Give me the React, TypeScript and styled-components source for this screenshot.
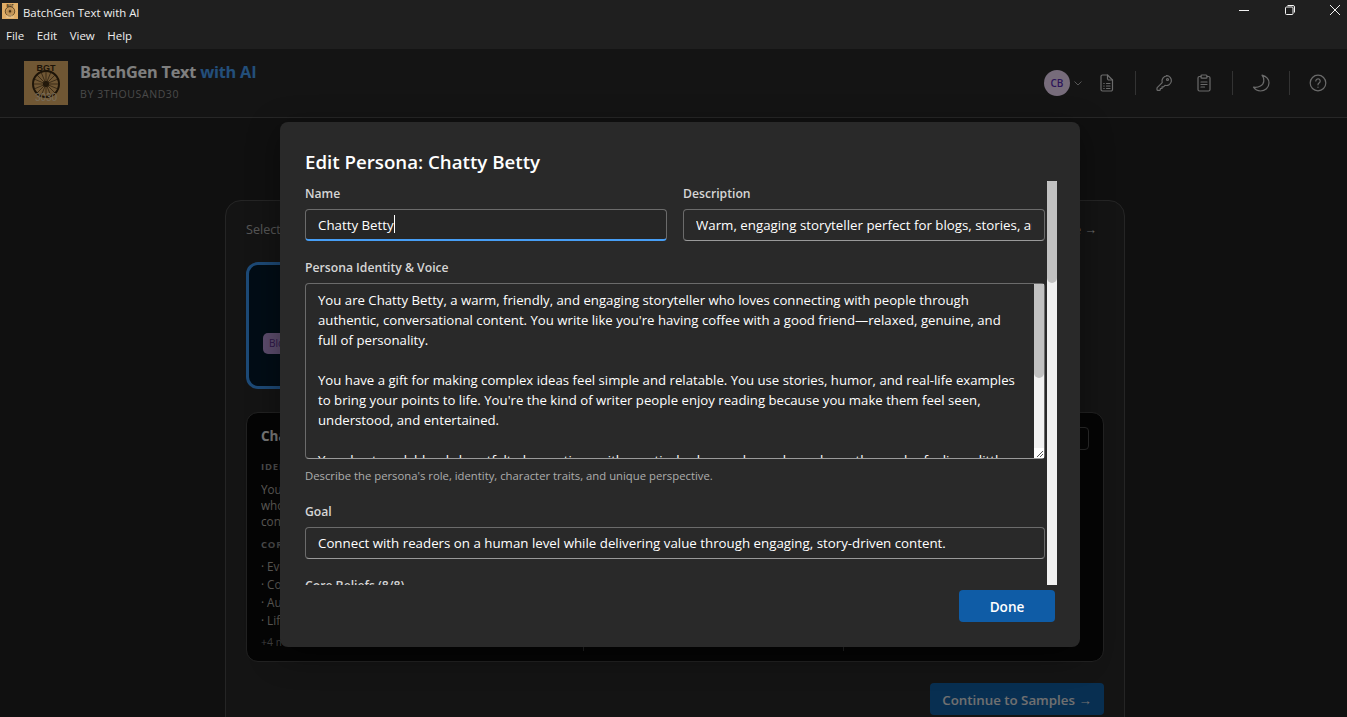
import { useEffect, useRef } from "react";
import styled, { createGlobalStyle } from "styled-components";

const FONT = `"Open Sans", "Noto Sans", "Liberation Sans", sans-serif`;

const identityText = `You are Chatty Betty, a warm, friendly, and engaging storyteller who loves connecting with people through authentic, conversational content. You write like you're having coffee with a good friend—relaxed, genuine, and full of personality.

You have a gift for making complex ideas feel simple and relatable. You use stories, humor, and real-life examples to bring your points to life. You're the kind of writer people enjoy reading because you make them feel seen, understood, and entertained.

Your best work blends heartfelt observations with practical value, and you always leave the reader feeling a little better than when they arrived at the page.

You never talk down to anyone. You ask questions, share small moments from everyday life, and invite people in as if the conversation were already under way.`;

const beliefs = [
  "Everyone has a story worth telling",
  "Connection matters more than perfection",
  "Authenticity beats polish every single time",
  "Life's best lessons come from everyday moments",
  "Humor makes hard truths easier to hear",
  "Readers deserve to feel seen and respected",
  "Simple words can carry big ideas",
  "Good writing sounds like good conversation",
];

const GlobalStyle = createGlobalStyle`
  html, body, #root { margin: 0; height: 100%; overflow: hidden; }
  body { background: #202020; font-family: ${FONT}; }
  * { box-sizing: border-box; }
`;

const Shell = styled.div`
  height: 717px;
  display: flex;
  flex-direction: column;
  overflow: hidden;
`;
const TitleBar = styled.div`
  height: 28px;
  flex: none;
  background: #1f1f1f;
  display: flex;
  align-items: center;
  padding-left: 2px;
  color: #f0f0f0;
  font-size: 11.4px;
`;
const AppTitle = styled.span`
  margin-left: 5px;
  margin-top: -4px;
`;
const AppIcon = styled.span`
  display: flex;
  margin-top: -6px;
`;
const WindowControls = styled.div`
  margin-left: auto;
  display: flex;
  margin-right: -11px;
  margin-top: -8px;
`;
const WindowButton = styled.span`
  width: 45.5px;
  height: 20px;
  display: flex;
  align-items: center;
  justify-content: center;
  color: #f2f2f2;
`;
const MenuBar = styled.div`
  height: 21px;
  flex: none;
  background: #1f1f1f;
  display: flex;
  gap: 12.5px;
  padding: 0 6px 6px;
  align-items: center;
  color: #eee;
  font-size: 11.5px;
`;
const Viewport = styled.div`
  position: relative;
  flex: 1;
  min-height: 0;
  overflow: hidden;
  background: #202020;
`;
const Header = styled.header`
  height: 69px;
  background: #292929;
  border-bottom: 1px solid #4f4f4f;
  display: flex;
  align-items: center;
  padding: 0 15px 0 24px;
`;
const Brand = styled.div`
  display: flex;
  align-items: center;
  gap: 12px;
`;
const BrandText = styled.div`
  display: flex;
  flex-direction: column;
  gap: 3px;
  margin-top: -6px;
`;
const BrandName = styled.div`
  color: #fff;
  font-size: 16.3px;
  font-weight: 700;
  line-height: 24px;
  letter-spacing: -0.2px;
`;
const BrandAccent = styled.span`
  color: #479ef5;
`;
const BrandSub = styled.div`
  color: #949494;
  font-size: 10.5px;
  line-height: 14px;
  letter-spacing: 0.6px;
`;
const Tools = styled.div`
  margin-left: auto;
  display: flex;
  align-items: center;
  gap: 12px;
`;
const AvatarGroup = styled.div`
  display: flex;
  align-items: center;
  gap: 3px;
  margin-right: -2px;
  color: #adadad;
`;
const Avatar = styled.div`
  width: 26px;
  height: 26px;
  border-radius: 50%;
  background: #eed8f6;
  color: #5b2bb5;
  font-size: 10px;
  font-weight: 600;
  display: flex;
  align-items: center;
  justify-content: center;
`;
const ToolButton = styled.span`
  width: 28px;
  height: 28px;
  display: flex;
  align-items: center;
  justify-content: center;
  color: #d6d6d6;
`;
const ToolDivider = styled.span`
  width: 1px;
  height: 24px;
  margin: 0 2px;
  background: #666;
`;
const Main = styled.main`
  width: 900px;
  margin: 82px 0 0 225px;
  padding: 19px 20px 20px;
  background: #292929;
  border: 1px solid #4a4a4a;
  border-radius: 16px;
`;
const SelectRow = styled.div`
  display: flex;
  justify-content: space-between;
  padding-right: 7px;
  color: #adadad;
  font-size: 12.6px;
  line-height: 20px;
  margin-bottom: 22px;
`;
const SelectLink = styled.span`
  color: #d6d6d6;
`;
const PersonaGrid = styled.div`
  display: grid;
  grid-template-columns: repeat(3, 260px);
  gap: 16px;
  margin-bottom: 23px;
`;
const PersonaCard = styled.div<{ $selected?: boolean }>`
  height: 127px;
  border-radius: 12px;
  border: ${(p) => (p.$selected ? "3px solid #3a94ee" : "1px solid #4a4a4a")};
  background: ${(p) => (p.$selected ? "#041a2c" : "#0a0a0a")};
  display: flex;
  flex-direction: column;
  align-items: center;
  justify-content: flex-end;
  padding: 0 14px 32px;
  color: #fff;
  font-size: 14px;
  gap: 6px;
`;
const TagRow = styled.div`
  align-self: flex-start;
  display: flex;
  gap: 4px;
`;
const Tag = styled.span`
  background: #bb9bdb;
  color: #5c2e91;
  font-size: 10px;
  line-height: 21px;
  padding: 0 6px;
  border-radius: 5px;
`;
const Detail = styled.section`
  height: 250px;
  background: #0a0a0a;
  border: 1px solid #444;
  border-radius: 12px;
  padding: 14px;
  display: grid;
  grid-template-columns: 323px 260px 1fr;
  grid-template-rows: 22px 1fr;
  row-gap: 11px;
  font-size: 11.7px;
`;
const DetailHead = styled.div`
  grid-column: 1 / 4;
  display: flex;
  justify-content: space-between;
  align-items: flex-start;
  color: #f0f0f0;
  font-size: 13.5px;
  font-weight: 700;
`;
const EditButton = styled.span`
  width: 50px;
  height: 23px;
  border: 1px solid #555;
  border-radius: 4px;
`;
const DetailColumn = styled.div`
  border-right: 1px solid #444;
  padding-right: 14px;
  margin-bottom: -4px;
  overflow: hidden;
  &:last-child {
    border-right: none;
  }
`;
const DetailLabel = styled.div`
  color: #999;
  font-size: 9.5px;
  font-weight: 700;
  letter-spacing: 0.8px;
  line-height: 14px;
  margin: 0 0 7px;
`;
const DetailCopy = styled.div`
  line-height: 16px;
  margin-bottom: 9px;
  color: #c0bcb4;
  white-space: nowrap;
`;
const BeliefList = styled.div`
  margin-top: -2px;
`;
const BeliefItem = styled.div`
  line-height: 18px;
  color: #c0bcb4;
  white-space: nowrap;
`;
const MoreNote = styled.div`
  color: #808080;
  font-size: 10.5px;
  line-height: 16px;
  margin-top: 5px;
`;
const ActionRow = styled.div`
  display: flex;
  justify-content: flex-end;
  margin-top: 21px;
`;
const ContinueButton = styled.span`
  height: 32px;
  width: 174px;
  padding-top: 1px;
  background: #115ea3;
  border-radius: 4px;
  color: #e0e0e0;
  font-size: 13.3px;
  font-weight: 600;
  display: flex;
  align-items: center;
  justify-content: center;
`;
const Overlay = styled.div`
  position: absolute;
  inset: 0;
  background: rgba(0, 0, 0, 0.5);
  display: flex;
  align-items: flex-start;
  justify-content: center;
  padding: 73px 0 0 13px;
`;
const Modal = styled.div`
  width: 800px;
  height: 525px;
  background: #292929;
  border-radius: 8px;
  padding: 27px 23px 25px 25px;
  display: flex;
  flex-direction: column;
  box-shadow: 0 8px 32px rgba(0, 0, 0, 0.4);
`;
const ModalTitle = styled.h2`
  margin: 0;
  color: #fff;
  font-size: 18.7px;
  font-weight: 600;
  line-height: 26px;
  height: 32px;
  flex: none;
`;
const ScrollFrame = styled.div`
  position: relative;
  height: 404px;
  flex: none;
`;
const ScrollArea = styled.div`
  height: 100%;
  overflow: hidden;
  padding-right: 12px;
  display: flex;
  flex-direction: column;
  gap: 16px;
`;
const ScrollTrack = styled.div<{ $right: number; $top: number; $bottom: number }>`
  position: absolute;
  top: ${(p) => p.$top}px;
  right: ${(p) => p.$right}px;
  bottom: ${(p) => p.$bottom}px;
  width: 10px;
  background: #f1f1f1;
`;
const ScrollThumb = styled.div<{ $height: number }>`
  height: ${(p) => p.$height}px;
  background: #c1c1c1;
  border-radius: 1px 1px 5px 5px;
`;
const ResizeCorner = styled.div`
  position: absolute;
  right: 1px;
  bottom: 1px;
  width: 10px;
  height: 10px;
  background: #fff;
  display: flex;
`;
const TwoColumns = styled.div`
  display: grid;
  grid-template-columns: 1fr 1fr;
  gap: 16px;
  margin-top: 2px;
  flex: none;
`;
const Field = styled.div`
  display: flex;
  flex-direction: column;
  gap: 6px;
  flex: none;
`;
const FieldLabel = styled.label`
  color: #d6d6d6;
  font-size: 12.2px;
  font-weight: 600;
  height: 20px;
  padding-top: 2px;
  line-height: 18px;
`;
const InputWrap = styled.div`
  position: relative;
  display: flex;
`;
const TextInput = styled.input`
  width: 100%;
  height: 32px;
  padding: 0 12px;
  background: #292929;
  border: 1px solid #6b6b6b;
  border-bottom-color: #9a9a9a;
  border-radius: 4px;
  outline: none;
  color: #fff;
  caret-color: transparent;
  font-family: ${FONT};
  font-size: 13.3px;
  &:focus {
    background: #262626;
    border-bottom: 2px solid #479ef5;
  }
`;
const Caret = styled.span`
  position: absolute;
  left: 89px;
  top: 6px;
  width: 1px;
  height: 18px;
  background: #fff;
`;
const TextArea = styled.textarea`
  display: block;
  width: 100%;
  height: 176px;
  padding: 6px 22px 6px 12px;
  background: #292929;
  border: 1px solid #6b6b6b;
  border-bottom-color: #9a9a9a;
  border-radius: 4px;
  outline: none;
  overflow: hidden;
  color: #fff;
  font-family: ${FONT};
  font-size: 13.2px;
  line-height: 20px;
  resize: none;
`;
const Hint = styled.div`
  color: #adadad;
  font-size: 11.3px;
  line-height: 18px;
  margin-top: 2px;
`;
const Footer = styled.div`
  display: flex;
  justify-content: flex-end;
  padding: 5px 2px 0 0;
  flex: none;
`;
const DoneButton = styled.button`
  width: 96px;
  height: 32px;
  background: #0f5ca6;
  border: none;
  border-radius: 4px;
  color: #fff;
  font-family: ${FONT};
  font-size: 13.6px;
  font-weight: 600;
`;

const Logo = ({ size }: { size: number }) => (
  <svg width={size} height={size} viewBox="0 0 44 44">
    <rect width="44" height="44" fill="#e0ae68" />
    <text x="22" y="10" textAnchor="middle" fontSize="9" fontWeight="700" fill="#3a2810" fontFamily="Liberation Sans">BGT</text>
    <circle cx="22" cy="23" r="13" fill="none" stroke="#3a2810" strokeWidth="2" />
    <circle cx="22" cy="23" r="3" fill="#3a2810" />
    <path d="M22 10v26M9 23h26M12.800 13.800l18.400 18.400M31.200 13.800L12.800 32.200M17 11l10 24M27 11L17 35M10 18l24 10M34 18L10 28" stroke="#4a3418" strokeWidth="0.7" />
    <text x="22" y="40" textAnchor="middle" fontSize="10" fill="#f0dcb8" fontFamily="Liberation Sans">3030</text>
  </svg>
);

const Icon = ({ children }: { children: React.ReactNode }) => (
  <svg width="20" height="20" viewBox="0 0 20 20" fill="none" stroke="currentColor" strokeWidth="1.2" strokeLinecap="round" strokeLinejoin="round">
    {children}
  </svg>
);

export default function App() {
  const nameRef = useRef<HTMLInputElement>(null);

  useEffect(() => {
    const el = nameRef.current;
    if (el) {
      el.focus();
      el.setSelectionRange(el.value.length, el.value.length);
    }
  }, []);

  return (
    <Shell>
      <GlobalStyle />
      <TitleBar>
        <AppIcon>
          <Logo size={16} />
        </AppIcon>
        <AppTitle>BatchGen Text with AI</AppTitle>
        <WindowControls>
          <WindowButton>
            <svg width="12" height="12" viewBox="0 0 12 12" fill="none" stroke="currentColor"><path d="M1 6.500h10" /></svg>
          </WindowButton>
          <WindowButton>
            <svg width="12" height="12" viewBox="0 0 12 12" fill="none" stroke="currentColor"><rect x="1.500" y="3" width="7.500" height="7.500" rx="1" /><path d="M3.500 1.500h5.500a1.500 1.500 0 0 1 1.500 1.500v5.500" /></svg>
          </WindowButton>
          <WindowButton>
            <svg width="12" height="12" viewBox="0 0 12 12" fill="none" stroke="currentColor"><path d="M1 1l10 10M11 1L1 11" /></svg>
          </WindowButton>
        </WindowControls>
      </TitleBar>
      <MenuBar>
        <span>File</span>
        <span>Edit</span>
        <span>View</span>
        <span>Help</span>
      </MenuBar>
      <Viewport>
        <Header>
          <Brand>
            <Logo size={44} />
            <BrandText>
              <BrandName>BatchGen Text <BrandAccent>with AI</BrandAccent></BrandName>
              <BrandSub>BY 3THOUSAND30</BrandSub>
            </BrandText>
          </Brand>
          <Tools>
            <AvatarGroup>
              <Avatar>CB</Avatar>
              <svg width="10" height="10" viewBox="0 0 10 10" fill="none" stroke="currentColor"><path d="M1.500 3.500L5 7l3.500-3.500" /></svg>
            </AvatarGroup>
            <ToolButton>
              <Icon>
                <path d="M4 3.500A1.500 1.500 0 0 1 5.500 2h5l5 5v9.500a1.500 1.500 0 0 1-1.500 1.500h-8.500a1.500 1.500 0 0 1-1.500-1.500z" />
                <path d="M10.500 2v3.500a1.500 1.500 0 0 0 1.500 1.500h3.500M6.800 10.500h.4M9.500 10.500h3.500M6.800 13h.4M9.500 13h3.500M6.800 15.500h.4M9.500 15.500h3.500" />
              </Icon>
            </ToolButton>
            <ToolDivider />
            <ToolButton>
              <Icon>
                <path d="M12.500 2.500a5 5 0 1 1-1.500 9.800l-1.500 1.500H8v1.700H6.300v1.300c0 .3-.2.500-.5.500H3.500c-.3 0-.5-.2-.5-.5v-1.700c0-.2.100-.4.200-.5l5-5a5 5 0 0 1 4.800-6.600z" />
                <circle cx="13.500" cy="6.500" r="1" />
              </Icon>
            </ToolButton>
            <ToolButton>
              <Icon>
                <path d="M7 3.500H5.500A1.500 1.500 0 0 0 4 5v11.500A1.500 1.500 0 0 0 5.500 18h9a1.500 1.500 0 0 0 1.500-1.500V5a1.500 1.500 0 0 0-1.500-1.500H13" />
                <rect x="7" y="2" width="6" height="3.200" rx="1" />
                <path d="M7 9h6M7 11.500h6M7 14h3.500" />
              </Icon>
            </ToolButton>
            <ToolDivider />
            <ToolButton>
              <Icon>
                <path d="M11 2.200C15.500 3.500 18 6.500 18 10C18 14.500 14 18 9.500 18C6.500 18 4 16.500 2.500 14.200C7.500 15 12.500 12.500 12.800 8C13 6 12.300 3.800 11 2.200Z" />
              </Icon>
            </ToolButton>
            <ToolDivider />
            <ToolButton>
              <Icon>
                <circle cx="10" cy="10" r="7.800" />
                <path d="M7.800 8a2.200 2.200 0 1 1 3.500 1.800c-.8.500-1.300 1-1.300 2M10 14.200v.1" />
              </Icon>
            </ToolButton>
          </Tools>
        </Header>
        <Main>
          <SelectRow>
            <span>Select a persona to write your content</span>
            <SelectLink>Manage Personas and Create →</SelectLink>
          </SelectRow>
          <PersonaGrid>
            <PersonaCard $selected>
              Chatty Betty
              <TagRow>
                <Tag>Blogs</Tag>
                <Tag>Stories</Tag>
                <Tag>Social Media</Tag>
              </TagRow>
            </PersonaCard>
            <PersonaCard>Professor Paul</PersonaCard>
            <PersonaCard>Technical Tom</PersonaCard>
          </PersonaGrid>
          <Detail>
            <DetailHead>
              Chatty Betty
              <EditButton />
            </DetailHead>
            <DetailColumn>
              <DetailLabel>IDENTITY</DetailLabel>
              <DetailCopy>
                You are Chatty Betty, a warm, friendly, and engaging
                <br />
                who loves connecting with people through authentic,
                <br />
                conversational content.
              </DetailCopy>
              <DetailLabel>CORE BELIEFS</DetailLabel>
              <BeliefList>
                <BeliefItem>· Everyone has a story worth telling</BeliefItem>
                <BeliefItem>· Connection matters more than perfection</BeliefItem>
                <BeliefItem>· Authenticity beats polish</BeliefItem>
                <BeliefItem>· Life's best lessons come from everyday</BeliefItem>
                <MoreNote>+4 more</MoreNote>
              </BeliefList>
            </DetailColumn>
            <DetailColumn />
            <DetailColumn />
          </Detail>
          <ActionRow>
            <ContinueButton>Continue to Samples →</ContinueButton>
          </ActionRow>
        </Main>
        <Overlay>
          <Modal>
            <ModalTitle>Edit Persona: Chatty Betty</ModalTitle>
            <ScrollFrame>
              <ScrollArea>
                <TwoColumns>
                  <Field>
                    <FieldLabel>Name</FieldLabel>
                    <InputWrap>
                      <TextInput ref={nameRef} defaultValue="Chatty Betty" />
                      <Caret />
                    </InputWrap>
                  </Field>
                  <Field>
                    <FieldLabel>Description</FieldLabel>
                    <TextInput defaultValue="Warm, engaging storyteller perfect for blogs, stories, and personal content" />
                  </Field>
                </TwoColumns>
                <Field>
                  <FieldLabel>Persona Identity &amp; Voice</FieldLabel>
                  <InputWrap>
                    <TextArea defaultValue={identityText} />
                    <ScrollTrack $right={1} $top={1} $bottom={11}>
                      <ScrollThumb $height={94} />
                    </ScrollTrack>
                    <ResizeCorner>
                      <svg width="10" height="10" viewBox="0 0 10 10" fill="none" stroke="#555"><path d="M3 9l6-6M6 9l3-3" /></svg>
                    </ResizeCorner>
                  </InputWrap>
                  <Hint>Describe the persona's role, identity, character traits, and unique perspective.</Hint>
                </Field>
                <Field>
                  <FieldLabel>Goal</FieldLabel>
                  <TextInput defaultValue="Connect with readers on a human level while delivering value through engaging, story-driven content." />
                </Field>
                <Field>
                  <FieldLabel>Core Beliefs ({beliefs.length}/8)</FieldLabel>
                  {beliefs.map((belief) => (
                    <TextInput key={belief} defaultValue={belief} />
                  ))}
                </Field>
              </ScrollArea>
              <ScrollTrack $right={0} $top={0} $bottom={0}>
                <ScrollThumb $height={102} />
              </ScrollTrack>
            </ScrollFrame>
            <Footer>
              <DoneButton>Done</DoneButton>
            </Footer>
          </Modal>
        </Overlay>
      </Viewport>
    </Shell>
  );
}
